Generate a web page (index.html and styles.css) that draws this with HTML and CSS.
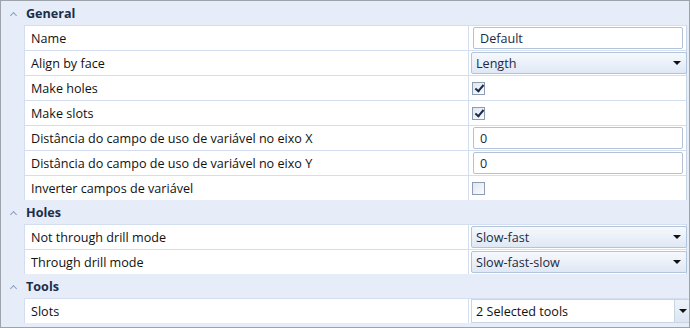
FILE: index.html
```html
<!DOCTYPE html>
<html lang="en">
  <head>
    <meta charset="UTF-8" />
    <title>Properties</title>
    <link rel="stylesheet" href="styles.css">
  </head>
  <body>
    <div class="grid">
      <!-- General -->
      <div class="cat-head"><span class="chev"></span>General</div>
      <div class="rows">
        <div class="row">
          <div class="label">Name</div>
          <div class="value"><div class="textbox">Default</div></div>
        </div>
        <div class="row">
          <div class="label">Align by face</div>
          <div class="value"><div class="combo">Length<span class="arrow"></span></div></div>
        </div>
        <div class="row">
          <div class="label">Make holes</div>
          <div class="value"><span class="check on"></span></div>
        </div>
        <div class="row">
          <div class="label">Make slots</div>
          <div class="value"><span class="check on"></span></div>
        </div>
        <div class="row">
          <div class="label">Distância do campo de uso de variável no eixo X</div>
          <div class="value"><div class="textbox">0</div></div>
        </div>
        <div class="row">
          <div class="label">Distância do campo de uso de variável no eixo Y</div>
          <div class="value"><div class="textbox">0</div></div>
        </div>
        <div class="row">
          <div class="label">Inverter campos de variável</div>
          <div class="value"><span class="check"></span></div>
        </div>
      </div>

      <!-- Holes -->
      <div class="cat-head"><span class="chev"></span>Holes</div>
      <div class="rows">
        <div class="row">
          <div class="label">Not through drill mode</div>
          <div class="value"><div class="combo">Slow-fast<span class="arrow"></span></div></div>
        </div>
        <div class="row">
          <div class="label">Through drill mode</div>
          <div class="value"><div class="combo">Slow-fast-slow<span class="arrow"></span></div></div>
        </div>
      </div>

      <!-- Tools -->
      <div class="cat-head"><span class="chev"></span>Tools</div>
      <div class="rows">
        <div class="row">
          <div class="label">Slots</div>
          <div class="value">
            <div class="picker">2 Selected tools<span class="picker-btn"><span class="arrow"></span></span></div>
          </div>
        </div>
      </div>
    </div>
  </body>
</html>
```

FILE: styles.css
```css
body {
  margin: 0;
  font-family: "Open Sans", "Noto Sans", sans-serif;
  font-size: 12.6px;
  color: #111;
}

.grid {
  width: 688px;
  height: 326px;
  border: 1px solid #9da3ab;
  background-color: #e6edf9;
  overflow: hidden;
}

.cat-head {
  height: 24px;
  display: flex;
  align-items: center;
  font-weight: bold;
  color: #1b2e4a;
}

.chev {
  width: 25px;
  height: 24px;
  position: relative;
}

.chev::before {
  content: "";
  position: absolute;
  left: 10px;
  top: 12px;
  width: 4px;
  height: 4px;
  border-left: 1px solid #8aa1c2;
  border-top: 1px solid #8aa1c2;
  transform: rotate(45deg);
}

.rows {
  margin-left: 23px;
  margin-right: 2px;
  border-left: 1px solid #d3dff0;
  border-right: 1px solid #c8d5e6;
  background-color: #fff;
}

.row {
  display: grid;
  grid-template-columns: 443px 1fr;
  height: 24px;
  border-top: 1px solid #d3dff0;
}

.label {
  padding-left: 6px;
  display: flex;
  align-items: center;
  white-space: nowrap;
  overflow: hidden;
}

.value {
  border-left: 1px solid #d3dff0;
  display: flex;
  align-items: center;
  padding-left: 2px;
}

.textbox {
  margin-left: 2px;
  width: 202px;
  height: 20px;
  border: 1px solid #b3c1d6;
  border-radius: 2px;
  padding-left: 6px;
  display: flex;
  align-items: center;
  color: #1b2b45;
}

.combo {
  width: 210px;
  height: 20px;
  border: 1px solid #b2c4db;
  border-radius: 2px;
  padding-left: 4px;
  display: flex;
  align-items: center;
  justify-content: space-between;
  background: linear-gradient(#f6f9fd, #dfe8f5);
  color: #1b2b45;
}

.arrow {
  width: 0;
  height: 0;
  margin-right: 5px;
  border-left: 4px solid transparent;
  border-right: 4px solid transparent;
  border-top: 4px solid #111;
}

.check {
  margin-left: 1px;
  width: 11px;
  height: 11px;
  border: 1px solid #8e9cb2;
  background: linear-gradient(135deg, #dfe6f1, #fafcff);
  position: relative;
}

.check.on::after {
  content: "";
  position: absolute;
  left: 4px;
  top: 0;
  width: 3px;
  height: 7px;
  border-right: 2px solid #1b2b4a;
  border-bottom: 2px solid #1b2b4a;
  transform: rotate(40deg);
}

.picker {
  width: 214px;
  height: 22px;
  border: 1px solid #c9d5e4;
  padding-left: 4px;
  display: flex;
  align-items: center;
  justify-content: space-between;
  color: #111;
}

.picker-btn {
  width: 15px;
  height: 22px;
  border-left: 1px solid #c9d5e4;
  background: linear-gradient(#eef3fa, #dbe5f2);
  display: flex;
  align-items: center;
  justify-content: center;
}

.picker-btn .arrow {
  margin-right: 0;
}
```
